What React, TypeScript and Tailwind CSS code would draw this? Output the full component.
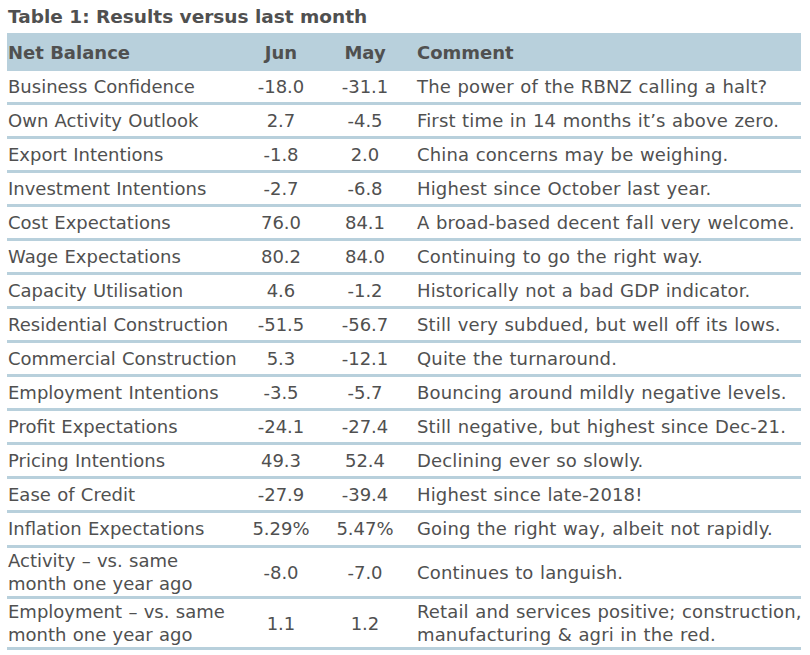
import React from 'react';

interface Row {
  label: React.ReactNode;
  jun: string;
  may: string;
  comment: React.ReactNode;
  tall?: boolean;
}

const rows: Row[] = [
  { label: 'Business Confidence', jun: '-18.0', may: '-31.1', comment: 'The power of the RBNZ calling a halt?' },
  { label: 'Own Activity Outlook', jun: '2.7', may: '-4.5', comment: 'First time in 14 months it’s above zero.' },
  { label: 'Export Intentions', jun: '-1.8', may: '2.0', comment: 'China concerns may be weighing.' },
  { label: 'Investment Intentions', jun: '-2.7', may: '-6.8', comment: 'Highest since October last year.' },
  { label: 'Cost Expectations', jun: '76.0', may: '84.1', comment: 'A broad-based decent fall very welcome.' },
  { label: 'Wage Expectations', jun: '80.2', may: '84.0', comment: 'Continuing to go the right way.' },
  { label: 'Capacity Utilisation', jun: '4.6', may: '-1.2', comment: 'Historically not a bad GDP indicator.' },
  { label: 'Residential Construction', jun: '-51.5', may: '-56.7', comment: 'Still very subdued, but well off its lows.' },
  { label: 'Commercial Construction', jun: '5.3', may: '-12.1', comment: 'Quite the turnaround.' },
  { label: 'Employment Intentions', jun: '-3.5', may: '-5.7', comment: 'Bouncing around mildly negative levels.' },
  { label: 'Profit Expectations', jun: '-24.1', may: '-27.4', comment: 'Still negative, but highest since Dec-21.' },
  { label: 'Pricing Intentions', jun: '49.3', may: '52.4', comment: 'Declining ever so slowly.' },
  { label: 'Ease of Credit', jun: '-27.9', may: '-39.4', comment: 'Highest since late-2018!' },
  { label: 'Inflation Expectations', jun: '5.29%', may: '5.47%', comment: 'Going the right way, albeit not rapidly.' },
  {
    label: (
      <>
        Activity – vs. same
        <br />
        month one year ago
      </>
    ),
    jun: '-8.0',
    may: '-7.0',
    comment: 'Continues to languish.',
    tall: true,
  },
  {
    label: (
      <>
        Employment – vs. same
        <br />
        month one year ago
      </>
    ),
    jun: '1.1',
    may: '1.2',
    comment: (
      <>
        Retail and services positive; construction,
        <br />
        manufacturing &amp; agri in the red.
      </>
    ),
    tall: true,
  },
];

export default function App() {
  return (
    <div className="w-[810px] h-[655px] bg-white text-[#505050] font-['DejaVu_Sans',Verdana,sans-serif] overflow-hidden">
      {/* Title */}
      <div className="h-[33px] pl-2 pt-[5px] text-[18.5px] font-bold leading-[24px] whitespace-nowrap">
        Table 1: Results versus last month
      </div>

      <div className="ml-[7px] w-[794px]">
        {/* Header */}
        <div className="grid grid-cols-[233px_82px_86px_1fr] h-[38px] items-center bg-[#b8d0dc] text-[18px] font-bold whitespace-nowrap">
          <div className="pl-px">Net Balance</div>
          <div className="text-center">Jun</div>
          <div className="text-center">May</div>
          <div className="pl-[9px]">Comment</div>
        </div>

        {/* Rows */}
        {rows.map((row, i) => (
          <div
            key={i}
            className={`grid grid-cols-[233px_82px_86px_1fr] items-center border-b-[3px] border-[#b8d0dc] text-[18px] [word-spacing:0.6px] whitespace-nowrap ${
              row.tall ? 'h-[51px] leading-[23px]' : i === 13 ? 'h-[35px] leading-[32px]' : 'h-[34px] leading-[31px]'
            }`}
          >
            <div className="pl-px">{row.label}</div>
            <div className="text-center">{row.jun}</div>
            <div className="text-center">{row.may}</div>
            <div className="pl-[9px] tracking-[0.15px]">{row.comment}</div>
          </div>
        ))}
      </div>
    </div>
  );
}
